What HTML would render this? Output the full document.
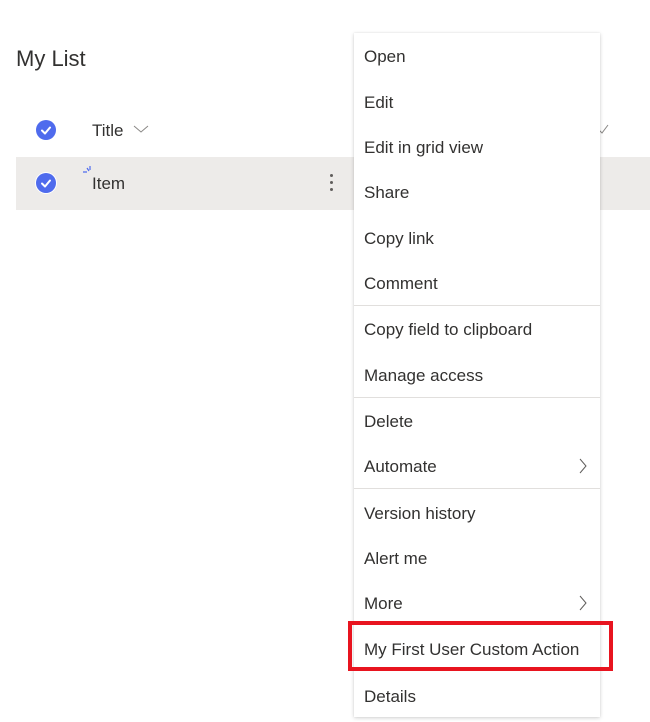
<!DOCTYPE html>
<html><head><style>
body{margin:0;width:650px;height:722px;background:#fff;position:relative;overflow:hidden;font-family:"Liberation Sans",sans-serif;color:#323130}
.a{position:absolute}
.ck{position:absolute;width:20px;height:20px;border-radius:50%;background:#4f6bed}
.ck svg{position:absolute;left:0;top:0}
.menu{position:absolute;left:354px;top:33px;width:246px;height:684px;background:#fff;box-shadow:0 1px 4px rgba(0,0,0,.18),0 0 1px rgba(0,0,0,.1)}
.it{position:absolute;left:10px;font-size:17px;line-height:20px;color:#323130;white-space:nowrap}
.dv{position:absolute;left:0;width:246px;height:1px;background:#e1dfdd}
.chev{position:absolute;left:224px}
</style></head><body>
<div class="a" style="left:16px;top:46px;font-size:22px;color:#323130">My List</div>
<div class="ck" style="left:36px;top:120px"><svg width="20" height="20"><path d="M6 10.5l3 3 5-6" stroke="#fff" stroke-width="2" fill="none" stroke-linecap="round" stroke-linejoin="round"/></svg></div>
<div class="a" style="left:92px;top:121px;font-size:17px">Title</div>
<svg class="a" style="left:133px;top:124px" width="16" height="10"><path d="M1 2l7 6 7-6" stroke="#8a8886" stroke-width="1" fill="none"/></svg>
<svg class="a" style="left:598px;top:124px" width="12" height="10"><path d="M1 6l3 3 6-8" stroke="#8a8886" stroke-width="1" fill="none"/></svg>
<div class="a" style="left:16px;top:157px;width:634px;height:53px;background:#edebe9"></div>
<div class="ck" style="left:36px;top:173px;box-shadow:0 0 0 1px #fff"><svg width="20" height="20"><path d="M6 10.5l3 3 5-6" stroke="#fff" stroke-width="2" fill="none" stroke-linecap="round" stroke-linejoin="round"/></svg></div>
<svg class="a" style="left:82px;top:166px" width="12" height="10"><path d="M1 6h4M5 2l2 3M8 0v4" stroke="#4f6bed" stroke-width="1.2"/></svg>
<div class="a" style="left:92px;top:174px;font-size:17px">Item</div>
<div class="a" style="left:330px;top:174px;width:3px;height:3px;border-radius:50%;background:#605e5c"></div>
<div class="a" style="left:330px;top:181px;width:3px;height:3px;border-radius:50%;background:#605e5c"></div>
<div class="a" style="left:330px;top:188px;width:3px;height:3px;border-radius:50%;background:#605e5c"></div>

<div class="menu">
<div class="it" style="top:14px">Open</div>
<div class="it" style="top:60px">Edit</div>
<div class="it" style="top:105px">Edit in grid view</div>
<div class="it" style="top:150px">Share</div>
<div class="it" style="top:196px">Copy link</div>
<div class="it" style="top:241px">Comment</div>
<div class="dv" style="top:272px"></div>
<div class="it" style="top:287px">Copy field to clipboard</div>
<div class="it" style="top:333px">Manage access</div>
<div class="dv" style="top:364px"></div>
<div class="it" style="top:379px">Delete</div>
<div class="it" style="top:424px">Automate</div>
<svg class="chev" style="top:425px" width="10" height="16"><path d="M2 1l6 7-6 7" stroke="#605e5c" stroke-width="1" fill="none"/></svg>
<div class="dv" style="top:455px"></div>
<div class="it" style="top:471px">Version history</div>
<div class="it" style="top:516px">Alert me</div>
<div class="it" style="top:561px">More</div>
<svg class="chev" style="top:562px" width="10" height="16"><path d="M2 1l6 7-6 7" stroke="#605e5c" stroke-width="1" fill="none"/></svg>
<div class="it" style="top:607px">My First User Custom Action</div>
<div class="it" style="top:654px">Details</div>
</div>
<div class="a" style="left:348px;top:621px;width:257px;height:42px;border:4px solid #e8141f"></div>
</body></html>
